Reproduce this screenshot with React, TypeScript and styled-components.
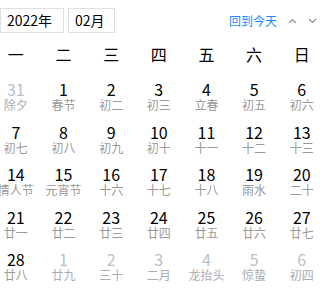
import React from 'react';
import styled, { createGlobalStyle } from 'styled-components';

const GlobalStyle = createGlobalStyle`
  body {
    margin: 0;
    background: #fff;
    font-family: "Noto Sans CJK SC", "Noto Sans", sans-serif;
  }
`;

type Day = { n: number; lunar: string; other?: boolean };

const weeks: Day[][] = [
  [
    { n: 31, lunar: '除夕', other: true },
    { n: 1, lunar: '春节' },
    { n: 2, lunar: '初二' },
    { n: 3, lunar: '初三' },
    { n: 4, lunar: '立春' },
    { n: 5, lunar: '初五' },
    { n: 6, lunar: '初六' },
  ],
  [
    { n: 7, lunar: '初七' },
    { n: 8, lunar: '初八' },
    { n: 9, lunar: '初九' },
    { n: 10, lunar: '初十' },
    { n: 11, lunar: '十一' },
    { n: 12, lunar: '十二' },
    { n: 13, lunar: '十三' },
  ],
  [
    { n: 14, lunar: '情人节' },
    { n: 15, lunar: '元宵节' },
    { n: 16, lunar: '十六' },
    { n: 17, lunar: '十七' },
    { n: 18, lunar: '十八' },
    { n: 19, lunar: '雨水' },
    { n: 20, lunar: '二十' },
  ],
  [
    { n: 21, lunar: '廿一' },
    { n: 22, lunar: '廿二' },
    { n: 23, lunar: '廿三' },
    { n: 24, lunar: '廿四' },
    { n: 25, lunar: '廿五' },
    { n: 26, lunar: '廿六' },
    { n: 27, lunar: '廿七' },
  ],
  [
    { n: 28, lunar: '廿八' },
    { n: 1, lunar: '廿九', other: true },
    { n: 2, lunar: '三十', other: true },
    { n: 3, lunar: '二月', other: true },
    { n: 4, lunar: '龙抬头', other: true },
    { n: 5, lunar: '惊蛰', other: true },
    { n: 6, lunar: '初四', other: true },
  ],
];

const weekNames = ['一', '二', '三', '四', '五', '六', '日'];

const Wrapper = styled.div`
  width: 329px;
  overflow: hidden;
`;

const Toolbar = styled.div`
  display: flex;
  align-items: center;
  padding-top: 8px;
  height: 25px;
`;

const SelectBox = styled.div<{ $w: number }>`
  box-sizing: border-box;
  width: ${({ $w }) => $w}px;
  height: 25px;
  border: 1px solid #dcdfe6;
  font-size: 14px;
  line-height: 23px;
  padding-left: 6px;
  color: #000;
  margin-right: 4px;
`;

const Spacer = styled.div`
  flex: 1;
`;

const TodayLink = styled.span`
  color: #1e88ff;
  font-size: 12px;
  margin-right: 11px;
`;

const Arrow = styled.svg`
  width: 9px;
  height: 6px;
  margin-right: 11px;
  &:last-child {
    margin-right: 12px;
  }
`;

const Grid = styled.div`
  display: grid;
  grid-template-columns: repeat(7, 47.67px);
  margin-left: -8px;
`;

const WeekHead = styled.div`
  height: 42px;
  display: flex;
  align-items: center;
  justify-content: center;
  font-size: 16px;
  color: #000;
`;

const Cell = styled.div`
  height: 42.5px;
  display: flex;
  flex-direction: column;
  align-items: center;
  justify-content: center;
`;

const DayNum = styled.div<{ $other?: boolean }>`
  font-size: 16px;
  line-height: 18px;
  color: ${({ $other }) => ($other ? '#b8bfcc' : '#000')};
`;

const Lunar = styled.div<{ $other?: boolean }>`
  font-size: 12px;
  line-height: 14px;
  color: ${({ $other }) => ($other ? '#a8acb4' : '#999')};
  white-space: nowrap;
`;

export default function App() {
  return (
    <Wrapper>
      <GlobalStyle />
      <Toolbar>
        <SelectBox $w={64}>2022年</SelectBox>
        <SelectBox $w={47}>02月</SelectBox>
        <Spacer />
        <TodayLink>回到今天</TodayLink>
        <Arrow viewBox="0 0 9 6">
          <path d="M1 5 L4.5 1.5 L8 5" fill="none" stroke="#8a8f99" strokeWidth="1.2" />
        </Arrow>
        <Arrow viewBox="0 0 9 6">
          <path d="M1 1 L4.5 4.5 L8 1" fill="none" stroke="#8a8f99" strokeWidth="1.2" />
        </Arrow>
      </Toolbar>
      <Grid>
        {weekNames.map((w) => (
          <WeekHead key={w}>{w}</WeekHead>
        ))}
        {weeks.flat().map((d, i) => (
          <Cell key={i}>
            <DayNum $other={d.other}>{d.n}</DayNum>
            <Lunar $other={d.other}>{d.lunar}</Lunar>
          </Cell>
        ))}
      </Grid>
    </Wrapper>
  );
}
